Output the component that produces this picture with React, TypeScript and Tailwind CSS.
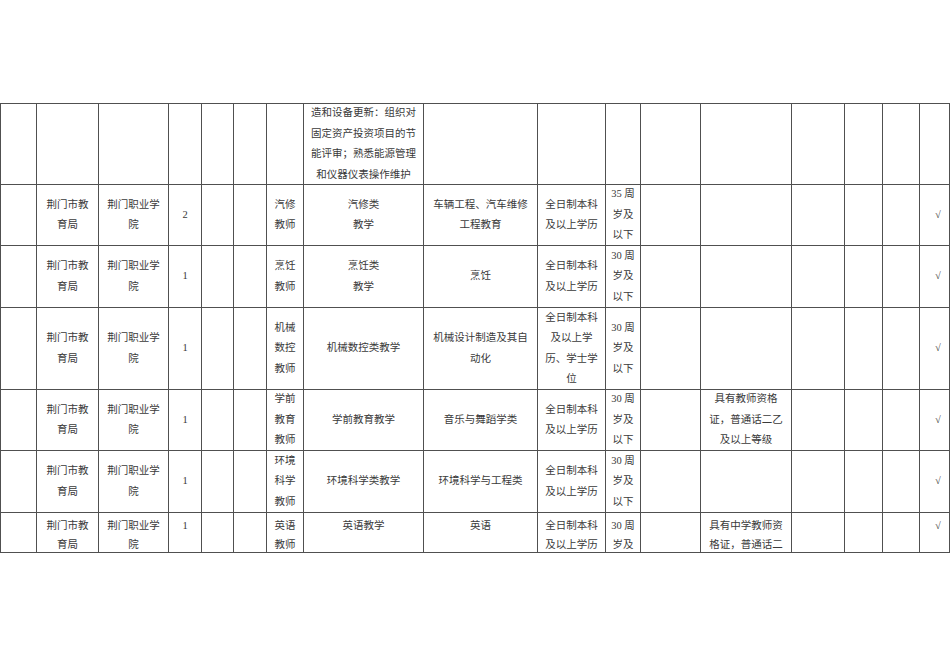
import React from "react"

type Cell = string[] | null

const ROW_CLASSES = [
  "h-[80px]",
  "h-[60px]",
  "h-[61px]",
  "h-[81px]",
  "h-[60px]",
  "h-[61px]",
  "h-[39px]",
]

const dept = ["荆门市教", "育局"]
const school = ["荆门职业学", "院"]
const edu = ["全日制本科", "及以上学历"]
const age30 = ["30 周", "岁及", "以下"]
const check = ["√"]

// 17 columns per row, null = empty cell
const rows: Cell[][] = [
  [
    null, null, null, null, null, null, null,
    ["造和设备更新：组织对", "固定资产投资项目的节", "能评审；熟悉能源管理", "和仪器仪表操作维护"],
    null, null, null, null, null, null, null, null, null,
  ],
  [
    null, dept, school, ["2"], null, null, ["汽修", "教师"], ["汽修类", "教学"],
    ["车辆工程、汽车维修", "工程教育"], edu, ["35 周", "岁及", "以下"],
    null, null, null, null, null, check,
  ],
  [
    null, dept, school, ["1"], null, null, ["烹饪", "教师"], ["烹饪类", "教学"],
    ["烹饪"], edu, age30, null, null, null, null, null, check,
  ],
  [
    null, dept, school, ["1"], null, null, ["机械", "数控", "教师"], ["机械数控类教学"],
    ["机械设计制造及其自", "动化"], ["全日制本科", "及以上学", "历、学士学", "位"], age30,
    null, null, null, null, null, check,
  ],
  [
    null, dept, school, ["1"], null, null, ["学前", "教育", "教师"], ["学前教育教学"],
    ["音乐与舞蹈学类"], edu, age30, null,
    ["具有教师资格", "证，普通话二乙", "及以上等级"], null, null, null, check,
  ],
  [
    null, dept, school, ["1"], null, null, ["环境", "科学", "教师"], ["环境科学类教学"],
    ["环境科学与工程类"], edu, age30, null, null, null, null, null, check,
  ],
  [
    null, dept, school, ["1"], null, null, ["英语", "教师"], ["英语教学"],
    ["英语"], edu, ["30 周", "岁及"], null,
    ["具有中学教师资", "格证，普通话二"], null, null, null, check,
  ],
]

export default function App() {
  return (
    <div className="w-[950px] h-[672px] overflow-hidden bg-white pt-[103px]">
      <div className="grid w-[950px] grid-cols-[35px_61px_69px_32px_31px_32px_36px_119px_113px_67px_34px_59px_90px_52px_37px_36px_29px] gap-px bg-[#505050] p-px font-['Liberation_Serif','Noto_Sans_CJK_SC',serif] text-[10.5px] text-[#3a3a3a]">
        {rows.map((row, r) => {
          const last = r === rows.length - 1
          return row.map((cell, c) => (
            <div
              key={`${r}-${c}`}
              className={`${ROW_CLASSES[r]} flex flex-col items-center bg-white text-center whitespace-nowrap ${
                last ? "justify-start pt-[4px] leading-[18.5px]" : "justify-center leading-[20.5px]"
              }`}
            >
              {cell?.map((line, i) => (
                <span key={i} className={line === "√" ? "text-[10px] pl-[7px]" : ""}>
                  {line}
                </span>
              ))}
            </div>
          ))
        })}
      </div>
    </div>
  )
}
